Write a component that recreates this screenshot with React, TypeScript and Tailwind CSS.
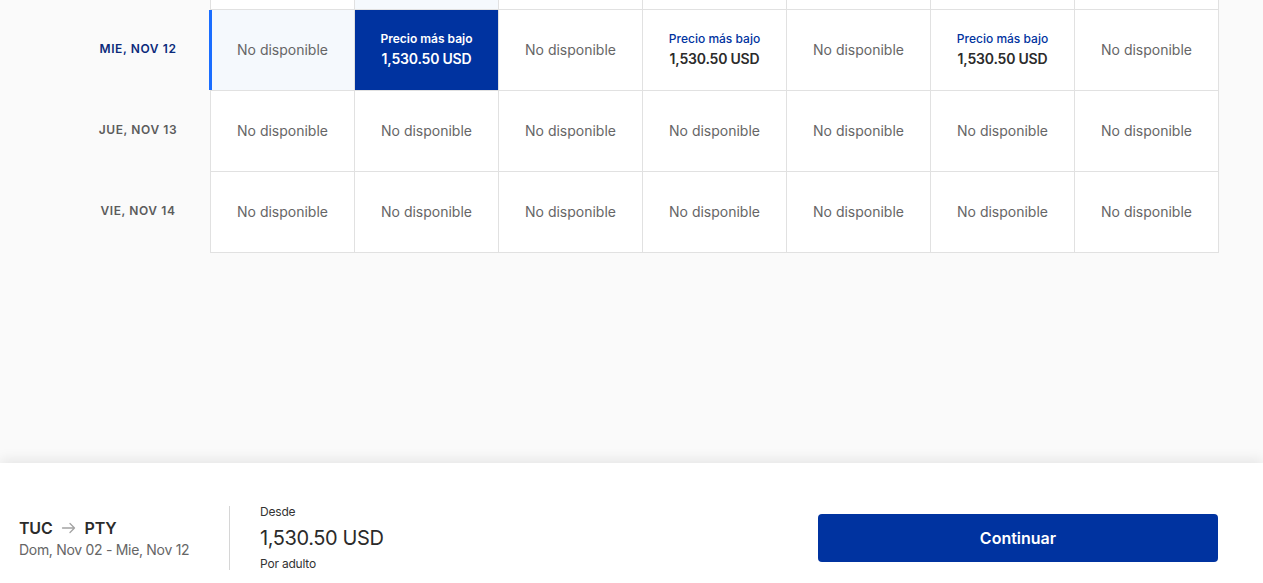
import React from "react";

type Cell = { kind: "na" } | { kind: "price"; selected?: boolean };

const NA: Cell = { kind: "na" };
const P: Cell = { kind: "price" };

const rows: { label: string; active?: boolean; cells: Cell[] }[] = [
  {
    label: "Mie, Nov 12",
    active: true,
    cells: [NA, { kind: "price", selected: true }, NA, P, NA, P, NA],
  },
  { label: "Jue, Nov 13", cells: [NA, NA, NA, NA, NA, NA, NA] },
  { label: "Vie, Nov 14", cells: [NA, NA, NA, NA, NA, NA, NA] },
];

function ArrowRight() {
  return (
    <svg width="16" height="16" viewBox="0 0 16 16" fill="none" className="mx-[8px]">
      <path d="M1.5 8h12M9 3.5 13.5 8 9 12.5" stroke="#a3a3a3" strokeWidth="1.3" strokeLinecap="round" strokeLinejoin="round" />
    </svg>
  );
}

export default function App() {
  return (
    <div className="flex h-[583px] flex-col overflow-hidden bg-[#fafafa] font-['Inter',sans-serif]">
      {/* Calendar matrix */}
      <section className="flex-1">
        <div className="flex pl-[66px]">
          <div className="w-[144px] shrink-0">
            <div className="h-[10px]" />
            {rows.map((r) => (
              <div
                key={r.label}
                className={`flex h-[81px] items-center justify-center pb-[3px] text-[12px] font-semibold uppercase tracking-[0.6px] ${
                  r.active ? "text-[#0b2a7a]" : "text-[#5c5c5c]"
                }`}
              >
                {r.label}
              </div>
            ))}
          </div>

          <div className="w-[1009px] border-l border-[#e1e1e1]">
            {/* partial row above */}
            <div className="grid h-[10px] grid-cols-7 border-b border-[#e1e1e1]">
              {Array.from({ length: 7 }).map((_, i) => (
                <div key={i} className={`border-r border-[#e1e1e1] ${i === 1 ? "bg-[#f5f9fd]" : "bg-white"}`} />
              ))}
            </div>

            {rows.map((r) => (
              <div key={r.label} className="grid grid-cols-7">
                {r.cells.map((c, i) => {
                  const selected = c.kind === "price" && c.selected;
                  const highlight = r.active && i === 0;
                  return (
                    <div
                      key={i}
                      className={`relative flex h-[81px] flex-col items-center justify-center border-b border-r border-[#e1e1e1] pb-[2px] ${
                        selected ? "border-[#0033a0] bg-[#0033a0]" : highlight ? "bg-[#f5f9fd]" : "bg-white"
                      }`}
                    >
                      {highlight && <span className="absolute -left-[2px] top-0 h-[80px] w-[3px] bg-[#1a6dff]" />}
                      {c.kind === "na" ? (
                        <span className="text-[14px] text-[#666666]">No disponible</span>
                      ) : (
                        <>
                          <span className={`text-[12px] leading-[16px] font-medium ${selected ? "text-white font-semibold" : "text-[#0033a0]"}`}>
                            Precio más bajo
                          </span>
                          <span className={`mt-[3px] text-[14px] leading-[18px] font-semibold tracking-[-0.2px] ${selected ? "text-white" : "text-[#2b2b2b]"}`}>
                            1,530.50 USD
                          </span>
                        </>
                      )}
                    </div>
                  );
                })}
              </div>
            ))}
          </div>
        </div>
      </section>

      {/* Bottom summary bar */}
      <footer className="relative h-[120px] shrink-0 bg-white pt-[43px] shadow-[0_-4px_12px_rgba(0,0,0,0.08)]">
        <div className="flex h-[64px] items-center pl-[19px] pr-[45px]">
          <div className="flex w-[172px] flex-col">
            <div className="flex items-center text-[16px] leading-[24px] font-semibold tracking-[-0.2px] text-[#2b2b2b]">
              TUC
              <ArrowRight />
              PTY
            </div>
            <div className="text-[14px] leading-[20px] tracking-[-0.3px] text-[#666666]">Dom, Nov 02 - Mie, Nov 12</div>
          </div>

          <div className="ml-[38px] h-[64px] w-px bg-[#d6d6d6]" />

          <div className="ml-[30px] flex flex-col gap-1">
            <span className="text-[12px] leading-[16px] tracking-[-0.2px] text-[#333333]">Desde</span>
            <span className="text-[20px] leading-[28px] tracking-[-0.4px] text-[#2b2b2b]">1,530.50 USD</span>
            <span className="text-[12px] leading-[16px] tracking-[-0.2px] text-[#333333]">Por adulto</span>
          </div>

          <button className="ml-auto h-[48px] w-[400px] rounded-[4px] bg-[#0033a0] text-[16px] font-semibold text-white">
            Continuar
          </button>
        </div>
      </footer>
    </div>
  );
}
